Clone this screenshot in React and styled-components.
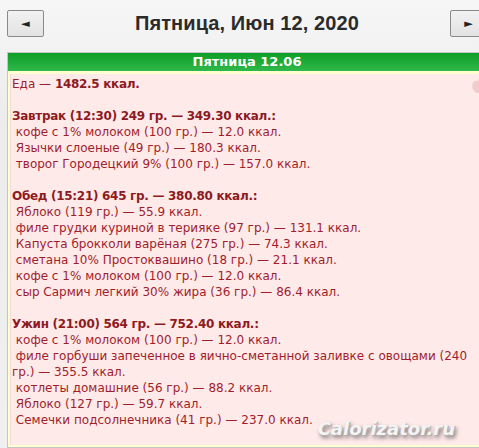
import React from "react";
import styled, { createGlobalStyle } from "styled-components";

const Global = createGlobalStyle`
  html, body {
    margin: 0;
    padding: 0;
    overflow: hidden;
  }
  body {
    background: linear-gradient(#f6f6f6, #ececec 120px, #f0f0f0);
    min-height: 448px;
    font-family: "DejaVu Sans", Verdana, sans-serif;
  }
`;

const Page = styled.div`
  width: 480px;
  margin-left: 7px;
  padding-top: 10px;
`;

const Header = styled.div`
  display: flex;
  align-items: center;
  justify-content: space-between;
  height: 27px;
  margin-bottom: 15px;
`;

const NavButton = styled.button`
  width: 37px;
  height: 27px;
  padding: 0;
  border: 1px solid #8a8a8a;
  border-radius: 2px;
  background: linear-gradient(#f2f2f2, #e2e2e2);
  color: #222;
  font-size: 11px;
  font-family: "DejaVu Sans", sans-serif;
  display: flex;
  align-items: center;
  justify-content: center;
`;

const Title = styled.h1`
  margin: 0;
  font-family: "Liberation Sans", Arial, sans-serif;
  font-weight: bold;
  font-size: 20px;
  letter-spacing: 0.1px;
  color: #2b2b2b;
`;

const Box = styled.div`
  border: 1px solid #c4c4c4;
  background: #ffffd2;
  padding-bottom: 2px;
`;

const DayBar = styled.div`
  height: 18px;
  line-height: 18px;
  background: linear-gradient(#0e9e27, #2fb84a);
  color: #fff;
  font-weight: bold;
  font-size: 13px;
  text-align: center;
`;

const Body = styled.div`
  position: relative;
  margin: 3px 3px 0 2px;
  height: 369px;
  padding: 2px 8px 0 1px;
  background: #ffeaea;
  border-left: 1px solid #f3dada;
  color: #a11d2b;
  font-size: 12px;
  line-height: 16px;
  overflow: hidden;
`;

const Line = styled.div`
  min-height: 16px;
  font-weight: ${(p) => (p.$bold ? "bold" : "normal")};
  letter-spacing: ${(p) => (p.$bold ? "-0.3px" : "0")};
  color: ${(p) => (p.$bold ? "#8e1a22" : "#a11d2b")};
`;

const Strong = styled.b`
  letter-spacing: -0.3px;
  color: #8e1a22;
`;

const Apple = styled.svg`
  position: absolute;
  top: 3px;
  right: -5px;
`;

const Watermark = styled.div`
  position: absolute;
  right: 28px;
  bottom: 8px;
  font-family: "DejaVu Sans", sans-serif;
  font-weight: bold;
  font-style: italic;
  font-size: 18px;
  color: #f4f4f4;
  text-shadow: 1px 1px 0 #b0b0b0, 2px 3px 4px rgba(0, 0, 0, 0.55);
`;

const meals = [
  {
    title: "Завтрак (12:30) 249 гр. — 349.30 ккал.:",
    items: [
      "кофе с 1% молоком (100 гр.) — 12.0 ккал.",
      "Язычки слоеные (49 гр.) — 180.3 ккал.",
      "творог Городецкий 9% (100 гр.) — 157.0 ккал.",
    ],
  },
  {
    title: "Обед (15:21) 645 гр. — 380.80 ккал.:",
    items: [
      "Яблоко (119 гр.) — 55.9 ккал.",
      "филе грудки куриной в терияке (97 гр.) — 131.1 ккал.",
      "Капуста брокколи варёная (275 гр.) — 74.3 ккал.",
      "сметана 10% Простоквашино (18 гр.) — 21.1 ккал.",
      "кофе с 1% молоком (100 гр.) — 12.0 ккал.",
      "сыр Сармич легкий 30% жира (36 гр.) — 86.4 ккал.",
    ],
  },
  {
    title: "Ужин (21:00) 564 гр. — 752.40 ккал.:",
    items: [
      "кофе с 1% молоком (100 гр.) — 12.0 ккал.",
      "филе горбуши запеченное в яично-сметанной заливке с овощами (240 гр.) — 355.5 ккал.",
      "котлеты домашние (56 гр.) — 88.2 ккал.",
      "Яблоко (127 гр.) — 59.7 ккал.",
      "Семечки подсолнечника (41 гр.) — 237.0 ккал.",
    ],
  },
];

export default function App() {
  return (
    <>
      <Global />
      <Page>
        <Header>
          <NavButton>◄</NavButton>
          <Title>Пятница, Июн 12, 2020</Title>
          <NavButton>►</NavButton>
        </Header>
        <Box>
          <DayBar>Пятница 12.06</DayBar>
          <Body>
            <Apple width="18" height="18" viewBox="0 0 16 16">
              <path d="M8 4c-2-1.5-6-1-6 4 0 4 3 7 6 6 3 1 6-2 6-6 0-5-4-5.5-6-4z" fill="#f0cccc" />
              <path d="M8 4c0-2 1-3 3-3" stroke="#f0cccc" strokeWidth="1.5" fill="none" />
            </Apple>
            <Line>
              Еда — <Strong>1482.5 ккал.</Strong>
            </Line>
            {meals.map((m) => (
              <React.Fragment key={m.title}>
                <Line />
                <Line $bold>{m.title}</Line>
                {m.items.map((it, i) => (
                  <Line key={i}>{"\u00a0" + it}</Line>
                ))}
              </React.Fragment>
            ))}
            <Watermark>Calorizator.ru</Watermark>
          </Body>
        </Box>
      </Page>
    </>
  );
}
